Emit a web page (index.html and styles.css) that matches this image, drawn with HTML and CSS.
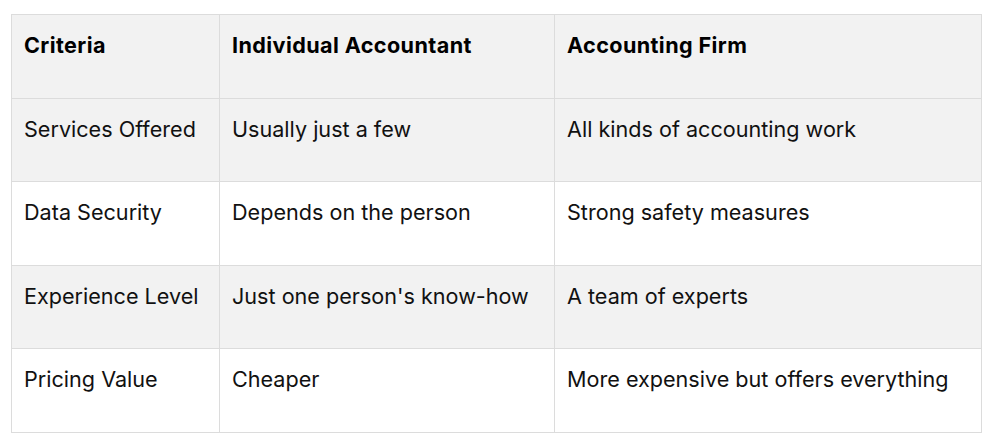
FILE: index.html
```html
<!DOCTYPE html>
<html>
<head>
<meta charset="utf-8">
<link rel="stylesheet" href="styles.css">
</head>
<body>
<table class="cmp">
  <colgroup>
    <col class="c1"><col class="c2"><col class="c3">
  </colgroup>
  <thead>
    <tr class="shade">
      <th>Criteria</th>
      <th>Individual Accountant</th>
      <th>Accounting Firm</th>
    </tr>
  </thead>
  <tbody>
    <tr class="shade">
      <td>Services Offered</td>
      <td>Usually just a few</td>
      <td>All kinds of accounting work</td>
    </tr>
    <tr>
      <td>Data Security</td>
      <td>Depends on the person</td>
      <td>Strong safety measures</td>
    </tr>
    <tr class="shade">
      <td>Experience Level</td>
      <td>Just one person's know-how</td>
      <td>A team of experts</td>
    </tr>
    <tr>
      <td>Pricing Value</td>
      <td>Cheaper</td>
      <td>More expensive but offers everything</td>
    </tr>
  </tbody>
</table>
</body>
</html>
```

FILE: styles.css
```css
html, body {
  margin: 0;
  padding: 0;
  background: #ffffff;
}
body {
  padding: 14px 0 0 11px;
  font-family: Inter, "Helvetica Neue", Arial, sans-serif;
  color: #111111;
}
.cmp {
  border-collapse: collapse;
  width: 970px;
  table-layout: fixed;
}
.c1 { width: 208px; }
.c2 { width: 335px; }
.c3 { width: 427px; }
.cmp th,
.cmp td {
  border: 1px solid #dcdcdc;
  height: 83.6px;
  box-sizing: border-box;
  padding: 15px 12px 0 12px;
  text-align: left;
  vertical-align: top;
  font-size: 21.6px;
  line-height: 30px;
  font-weight: 400;
  white-space: nowrap;
}
.cmp th {
  font-weight: 700;
  letter-spacing: 0.4px;
  color: #000;
}
.shade {
  background: #f2f2f2;
}
```
